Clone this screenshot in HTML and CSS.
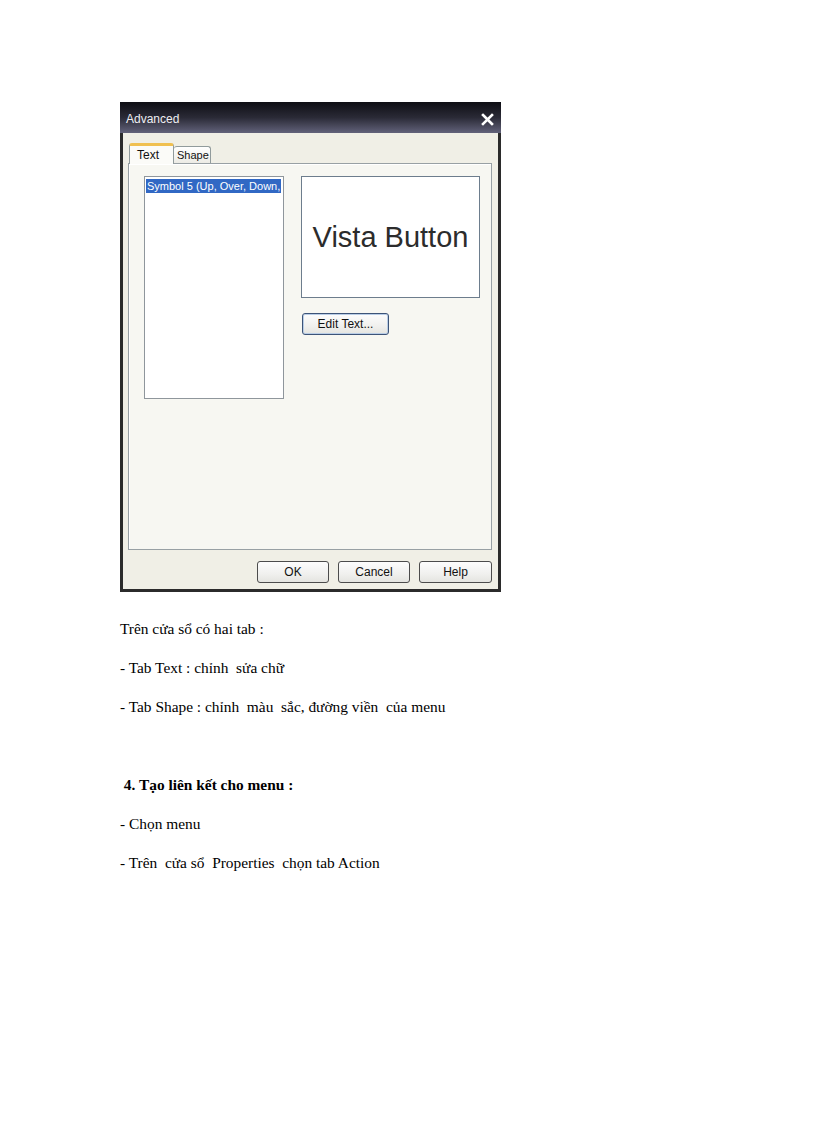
FILE: index.html
```html
<!DOCTYPE html>
<html lang="vi">
<head>
    <meta charset="UTF-8">
    <title>Advanced</title>
    <link rel="stylesheet" href="styles.css">
</head>
<body>
<div class="page">

    <!-- Advanced dialog screenshot -->
    <div class="dialog">
        <div class="titlebar">
            <span class="title">Advanced</span>
            <svg class="close" width="13" height="13" viewBox="0 0 13 13">
                <path d="M2 2 L11 11 M11 2 L2 11" stroke="#fff" stroke-width="2.6" stroke-linecap="square"/>
            </svg>
        </div>
        <div class="dialog-body">
            <div class="tabs">
                <div class="tab active">Text</div>
                <div class="tab">Shape</div>
            </div>
            <div class="panel">
                <div class="listbox">
                    <div class="list-item selected">Symbol 5 (Up, Over, Down,</div>
                </div>
                <div class="right-col">
                    <div class="preview">Vista Button</div>
                    <div class="btn edit-btn">Edit Text...</div>
                </div>
            </div>
            <div class="buttons">
                <div class="btn">OK</div>
                <div class="btn">Cancel</div>
                <div class="btn">Help</div>
            </div>
        </div>
    </div>

    <!-- Text under the picture -->
    <div class="doc">
        <p>Trên cửa sổ có hai tab :</p>
        <p>- Tab Text : chỉnh  sửa chữ</p>
        <p>- Tab Shape : chỉnh  màu  sắc, đường viền  của menu</p>
        <p class="blank"></p>
        <p class="heading"> 4. Tạo liên kết cho menu :</p>
        <p>- Chọn menu</p>
        <p>- Trên  cửa sổ  Properties  chọn tab Action</p>
    </div>

</div>
</body>
</html>
```

FILE: styles.css
```css
body {
    margin: 0;
    background-color: #fff;
    font-family: "Liberation Serif", "Times New Roman", serif;
}

.page {
    padding: 102px 0 0 120px;
}

/* Dialog */
.dialog {
    width: 381px;
    height: 490px;
    box-sizing: border-box;
    background-color: #f0efe6;
    border: 3px solid #2b2b2b;
    border-top: none;
    display: flex;
    flex-direction: column;
    font-family: "Liberation Sans", Arial, sans-serif;
    font-size: 12px;
    color: #111;
}

.titlebar {
    height: 31px;
    margin: 0 -3px;
    background: linear-gradient(#0e0e14, #2a2a36 50%, #62627a);
    display: flex;
    align-items: center;
    justify-content: space-between;
    padding: 2px 7px 0 6px;
    box-sizing: border-box;
}

.title {
    color: #eeeef2;
    font-size: 12px;
}

.close {
    margin-top: 1px;
}

.dialog-body {
    flex: 1;
    display: flex;
    flex-direction: column;
    padding: 9px 6px 6px 5px;
}

.tabs {
    display: flex;
    align-items: flex-end;
    padding-left: 1px;
    height: 21px;
}

.tab {
    height: 17px;
    box-sizing: border-box;
    border: 1px solid #919b9c;
    border-bottom: none;
    border-left: none;
    border-radius: 3px 3px 0 0;
    background: linear-gradient(#ffffff, #ecebe5);
    padding: 2px 0 0 3px;
    width: 37px;
    font-size: 11px;
    white-space: nowrap;
}

.tab.active {
    height: 21px;
    width: 45px;
    border-left: 1px solid #919b9c;
    border-top: 3px solid #f0c050;
    background: #fbfbf8;
    padding: 2px 0 0 7px;
    font-size: 12px;
    position: relative;
    top: 1px;
    z-index: 1;
}

.panel {
    height: 387px;
    box-sizing: border-box;
    border: 1px solid #98a0a4;
    box-shadow: inset 1px 1px 0 #fff;
    background-color: #f7f7f2;
    display: flex;
    align-items: flex-start;
    padding: 12px 0 0 15px;
    gap: 17px;
}

.listbox {
    width: 140px;
    height: 223px;
    box-sizing: border-box;
    background: #fff;
    border: 1px solid #8f969c;
    padding: 2px 2px 0 1px;
}

.list-item {
    height: 14px;
    line-height: 14px;
    white-space: nowrap;
    overflow: hidden;
    padding-left: 1px;
    font-size: 11px;
}

.list-item.selected {
    background-color: #3168c4;
    color: #fff;
}

.right-col {
    display: flex;
    flex-direction: column;
    align-items: flex-start;
    gap: 15px;
}

.preview {
    width: 179px;
    height: 122px;
    box-sizing: border-box;
    border: 1px solid #6d7d8d;
    background: #fff;
    display: flex;
    align-items: center;
    justify-content: center;
    font-family: "Liberation Sans", Arial, sans-serif;
    font-size: 29px;
    color: #2c2c2c;
    padding-top: 1px;
}

.btn {
    width: 72px;
    height: 22px;
    box-sizing: border-box;
    border: 1px solid #4c4c4c;
    border-radius: 3px;
    background: linear-gradient(#fdfdfd, #f0f0ee 60%, #e4e4e0);
    display: flex;
    align-items: center;
    justify-content: center;
}

.edit-btn {
    width: 87px;
    margin-left: 1px;
    border-color: #3d5478;
    box-shadow: inset 0 0 0 1px #b9cde6;
}

.buttons {
    display: flex;
    justify-content: flex-end;
    gap: 9px;
    margin-top: 11px;
}

.buttons .btn:last-child {
    width: 73px;
}

/* Document text */
.doc {
    margin-top: 17px;
    font-size: 15.4px;
    color: #000;
}

.doc p {
    margin: 0;
    height: 39px;
    line-height: 39px;
    white-space: pre;
}

.doc .heading {
    font-weight: bold;
}
```
